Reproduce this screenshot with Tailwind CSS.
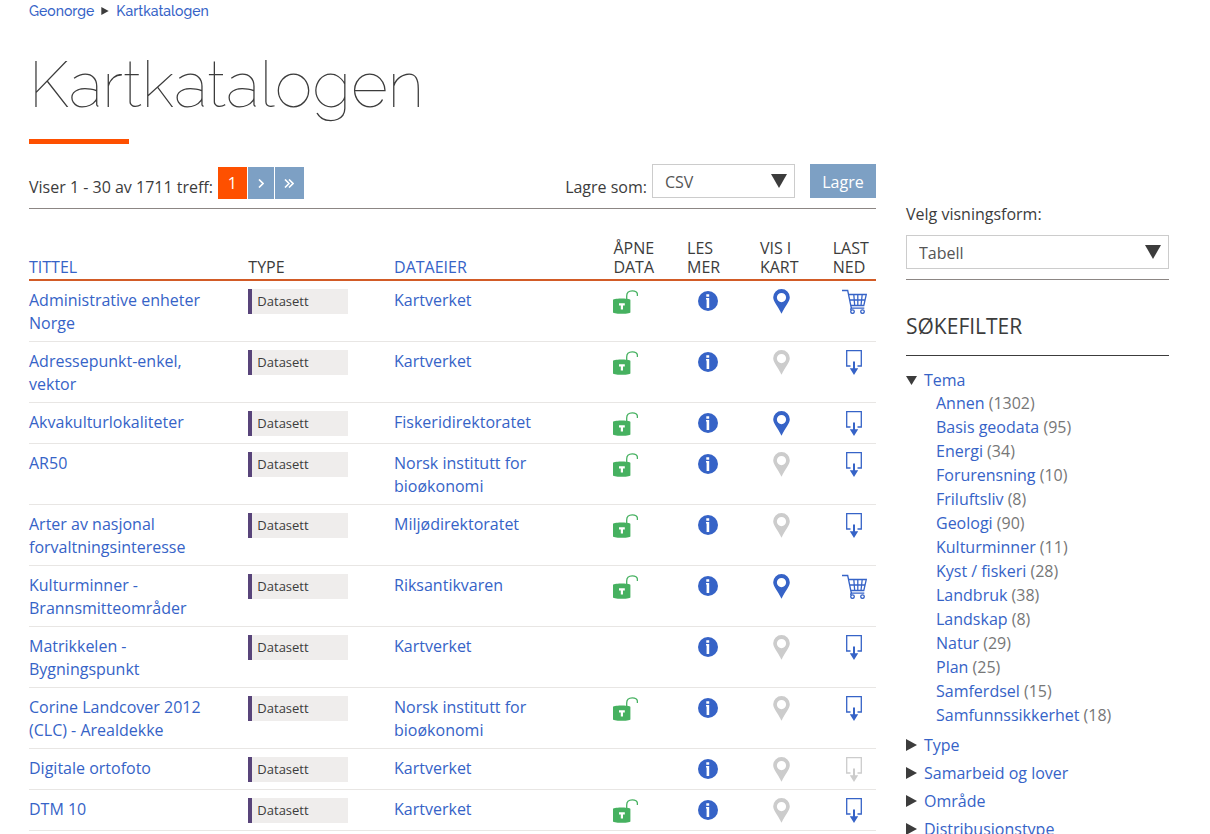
<!DOCTYPE html>
<html lang="no">
<head>
<meta charset="utf-8">
<title>Kartkatalogen</title>
<script src="https://cdn.jsdelivr.net/npm/@tailwindcss/browser@4"></script>
</head>
<body class="bg-white font-['Open_Sans',sans-serif] text-base text-[#3c3c3c]">
<svg class="hidden" aria-hidden="true">
  <symbol id="lock" viewBox="0 0 25 25">
    <path fill="none" stroke="#46b160" stroke-width="1.3" d="M13.7 11V7c0-3 1.700-5.100 5.600-5.100 3.700 0 5.100 1.700 5.100 3.700V7"/>
    <path fill="#46b160" d="M0 11c0-1 6-1.400 8.700-1.400s8.700.4 8.700 1.400v12.500c0 1-6 1.300-8.700 1.300S0 24.500 0 23.500z"/>
    <path fill="#fff" d="M6 14.300h5.800v2.300H10v4H7.800v-4H6z"/>
  </symbol>
  <symbol id="info" viewBox="0 0 20 20">
    <circle cx="10" cy="10" r="10" fill="#3663c7"/>
    <path fill="#fff" d="M8.300 3.300h2.900v2.400H8.300zM8 7h3.200v10H8.600V8.600H8z"/>
  </symbol>
  <symbol id="pin" viewBox="0 0 17 25">
    <path fill="currentColor" fill-rule="evenodd" d="M8.500 0a8.300 8.300 0 0 1 8.300 8.300c0 4.700-5 9.200-8.300 16.500C5.200 17.500.2 13 .2 8.300A8.300 8.300 0 0 1 8.500 0zm0 4a4.600 4.600 0 1 0 0 9.200 4.600 4.600 0 0 0 0-9.200z"/>
  </symbol>
  <symbol id="cart" viewBox="0 0 25 25">
    <g fill="none" stroke="#3663c7" stroke-width="1.300">
      <path d="M0 1.500h5.700l3.600 17.500M6.500 5.500h17.800l-2.500 11H8.900M7.500 11h15.500M11.800 5.500l.9 11M15.800 5.500v11M20.200 5.500l-1.200 11M9.700 21.200c-1.500-.4-1.200-2 .2-2h12.400"/>
      <circle cx="10.500" cy="22.600" r="1.800"/><circle cx="20.500" cy="22.600" r="1.800"/>
    </g>
  </symbol>
  <symbol id="down" viewBox="0 0 16 25">
    <path fill="none" stroke="currentColor" stroke-width="1.300" d="M4.500 16H.7V.7h14.600V16h-3.800"/>
    <path fill="currentColor" d="M7 11.500h2v6.700h3.200L8 25l-4.200-6.800H7z"/>
  </symbol>
  <symbol id="tri-down" viewBox="0 0 16 14"><path fill="#3c3c3c" d="M0 0h16L8 14z"/></symbol>
  <symbol id="tri-right" viewBox="0 0 11 12"><path fill="#3c3c3c" d="M0 0l11 6L0 12z"/></symbol>
</svg>

<div class="pl-[29px] pr-[41px]">
  <nav aria-label="Brødsmuler" class="flex h-[22px] items-center gap-[7px] font-[Raleway,Lato,sans-serif] text-[14px] font-medium text-[#3663c7]">
    <a href="#">Geonorge</a>
    <svg class="h-2 w-2" aria-hidden="true"><use href="#tri-right"/></svg>
    <a href="#">Kartkatalogen</a>
  </nav>
  <h1 class="mt-[23px] font-[Raleway,Lato,sans-serif] text-[64px] leading-[80px] font-thin">Kartkatalogen</h1>
  <div class="mt-[14px] h-[5px] w-[100px] bg-[#fe5000]"></div>

  <div class="flex items-start gap-[30px]">
    <main class="min-w-0 flex-1 pt-5">
      <div class="flex h-[45px] items-start justify-between border-b border-[#8c8684]">
        <div class="flex items-start">
          <span class="mr-[5px] pt-[11px] leading-6">Viser 1 - 30 av 1711 treff:</span>
          <nav aria-label="Sider" class="flex gap-px pt-[3px] text-white">
            <button class="h-8 w-[29px] bg-[#fe5000]">1</button>
            <button aria-label="Neste" class="flex h-8 w-[26px] items-center justify-center bg-[#7da0c4]"><svg class="h-[9px] w-[6px]" viewBox="0 0 6 9" fill="none" stroke="#fff" stroke-width="1.600"><path d="M1 .5l4 4-4 4"/></svg></button>
            <button aria-label="Siste" class="flex h-8 w-[29px] items-center justify-center bg-[#7da0c4]"><svg class="h-[9px] w-[10px]" viewBox="0 0 10 9" fill="none" stroke="#fff" stroke-width="1.600"><path d="M1 .5l4 4-4 4M5 .5l4 4-4 4"/></svg></button>
          </nav>
        </div>
        <div class="flex items-start">
          <label for="format" class="mr-[5px] pt-[11px] leading-6">Lagre som:</label>
          <div class="relative mr-[15px] w-[143px]">
            <select id="format" class="h-[34px] w-full appearance-none border border-[#ccc] bg-white pt-0.5 pl-3 text-[#555]"><option>CSV</option></select>
            <svg class="pointer-events-none absolute top-2.5 right-2 h-3.5 w-4" aria-hidden="true"><use href="#tri-down"/></svg>
          </div>
          <button class="h-[34px] w-[66px] bg-[#7da0c4] pt-0.5 text-white">Lagre</button>
        </div>
      </div>

      <table class="mt-[30px] w-full table-fixed border-collapse text-left text-[#3663c7] [&_td]:border-b [&_td]:border-[#e8e6e4] [&_td]:p-0 [&_td]:pt-2 [&_td]:pb-1.5 [&_td]:align-top [&_td]:leading-[23px] [&_tbody_tr]:h-[41px] [&_td_svg]:block [&_td:nth-child(1)]:pr-10 [&_td:nth-child(3)]:pr-16 [&_td_span]:block [&_td_span]:h-[25px] [&_td_span]:w-[100px] [&_td_span]:border-l-4 [&_td_span]:border-[#58447a] [&_td_span]:bg-[#efedec] [&_td_span]:pl-[5px] [&_td_span]:text-[13px] [&_td_span]:leading-[25px] [&_td_span]:text-[#3c3c3c]">
        <colgroup><col class="w-[25.9%]"><col class="w-[17.2%]"><col class="w-[25.9%]"><col class="w-[8.7%]"><col class="w-[8.6%]"><col class="w-[8.6%]"><col></colgroup>
        <thead>
          <tr class="border-b-2 border-[#d25b26] align-bottom leading-[19px] text-[#3c3c3c] [&_th]:p-0 [&_th]:pb-0.5 [&_th]:font-normal">
            <th><a href="#" class="text-[#3663c7]">TITTEL</a></th><th>TYPE</th><th><a href="#" class="text-[#3663c7]">DATAEIER</a></th><th>ÅPNE<br>DATA</th><th>LES<br>MER</th><th>VIS I<br>KART</th><th>LAST<br>NED</th>
          </tr>
        </thead>
        <tbody id="rows"></tbody>
      </table>
    </main>

    <aside class="w-[263px] shrink-0 pt-[58px]">
      <label for="view" class="block leading-6">Velg visningsform:</label>
      <div class="relative mt-[9px]">
        <select id="view" class="h-[34px] w-full appearance-none border border-[#ccc] bg-white pt-0.5 pl-3 text-[#555]"><option>Tabell</option></select>
        <svg class="pointer-events-none absolute top-2.5 right-2 h-3.5 w-4" aria-hidden="true"><use href="#tri-down"/></svg>
      </div>
      <div class="mt-[10px] border-t border-[#8c8684]"></div>
      <h2 class="mt-8 border-b border-[#3c3c3c] pb-[15px] text-[21px] leading-7">SØKEFILTER</h2>
      <div class="mt-3 text-[#3663c7]">
        <a href="#" class="flex h-6 items-center gap-[7px]"><svg class="h-[9px] w-[11px]" viewBox="0 0 16 14" preserveAspectRatio="none" aria-hidden="true"><path fill="#3c3c3c" d="M0 0h16L8 14z"/></svg>Tema</a>
        <ul id="themes" class="-mt-px pl-[30px] leading-6"></ul>
        <ul id="groups" class="mt-1"></ul>
      </div>
    </aside>
  </div>
</div>

<script>
  const lock = '<svg class="h-[25px] w-[25px]" role="img" aria-label="Åpne data"><use href="#lock"/></svg>';
  const info = '<a href="#" aria-label="Les mer"><svg class="mt-0.5 ml-[11px] h-5 w-5"><use href="#info"/></svg></a>';
  const pin = {
    on: '<a href="#" aria-label="Vis i kart"><svg class="ml-[13px] h-[25px] w-[17px] text-[#3663c7]"><use href="#pin"/></svg></a>',
    off: '<svg class="ml-[13px] h-[25px] w-[17px] text-[#ccc]"><use href="#pin"/></svg>'
  };
  const get = {
    cart: '<a href="#" aria-label="Legg i kurv"><svg class="ml-[9px] h-[25px] w-[25px]"><use href="#cart"/></svg></a>',
    down: '<a href="#" aria-label="Last ned"><svg class="ml-[13px] h-[25px] w-[16px] text-[#3663c7]"><use href="#down"/></svg></a>',
    off: '<svg class="ml-[13px] h-[25px] w-[16px] text-[#ccc]"><use href="#down"/></svg>'
  };
  const rows = [
    ['Administrative enheter Norge', 'Kartverket', 1, 'on', 'cart'],
    ['Adressepunkt-enkel, vektor', 'Kartverket', 1, 'off', 'down'],
    ['Akvakulturlokaliteter', 'Fiskeridirektoratet', 1, 'on', 'down'],
    ['AR50', 'Norsk institutt for bioøkonomi', 1, 'off', 'down'],
    ['Arter av nasjonal forvaltningsinteresse', 'Miljødirektoratet', 1, 'off', 'down'],
    ['Kulturminner - Brannsmitteområder', 'Riksantikvaren', 1, 'on', 'cart'],
    ['Matrikkelen - Bygningspunkt', 'Kartverket', 0, 'off', 'down'],
    ['Corine Landcover 2012 (CLC) - Arealdekke', 'Norsk institutt for bioøkonomi', 1, 'off', 'down'],
    ['Digitale ortofoto', 'Kartverket', 0, 'off', 'off'],
    ['DTM 10', 'Kartverket', 1, 'off', 'down']
  ];
  document.getElementById('rows').innerHTML = rows.map(([t, o, l, p, g]) =>
    `<tr><td><a href="#">${t}</a></td><td><span>Datasett</span></td><td><a href="#">${o}</a></td><td>${l ? lock : ''}</td><td>${info}</td><td>${pin[p]}</td><td>${get[g]}</td></tr>`).join('');
  const themes = [['Annen', 1302], ['Basis geodata', 95], ['Energi', 34], ['Forurensning', 10], ['Friluftsliv', 8], ['Geologi', 90], ['Kulturminner', 11], ['Kyst / fiskeri', 28], ['Landbruk', 38], ['Landskap', 8], ['Natur', 29], ['Plan', 25], ['Samferdsel', 15], ['Samfunnssikkerhet', 18]];
  document.getElementById('themes').innerHTML = themes.map(([n, c]) => `<li><a href="#">${n}</a> <span class="text-[#777]">(${c})</span></li>`).join('');
  document.getElementById('groups').innerHTML = ['Type', 'Samarbeid og lover', 'Område', 'Distribusjonstype'].map(n =>
    `<li><a href="#" class="flex h-7 items-center gap-[7px]"><svg class="h-3 w-[11px]" aria-hidden="true"><use href="#tri-right"/></svg>${n}</a></li>`).join('');
</script>
</body>
</html>
